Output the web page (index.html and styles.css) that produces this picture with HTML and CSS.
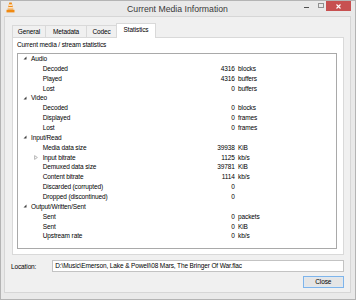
FILE: index.html
```html
<!DOCTYPE html>
<html>
<head>
<meta charset="utf-8">
<link rel="stylesheet" href="styles.css">
</head>
<body>
<div class="window">
  <div class="titlebar">
    <div class="tb-left">
      <svg class="vlc" width="9" height="11" viewBox="0 0 9 11">
        <path d="M3.3 0.5 L5.7 0.5 L7.4 7.5 L1.6 7.5 Z" fill="#f08a12"/>
        <path d="M2.9 2.6 L6.1 2.6 L6.4 3.8 L2.6 3.8 Z" fill="#fff"/>
        <path d="M2.2 5.3 L6.8 5.3 L7.1 6.5 L1.9 6.5 Z" fill="#fff"/>
        <path d="M0.5 7.8 L8.5 7.8 L8.5 10.4 L0.5 10.4 Z" fill="#f08a12"/>
      </svg>
    </div>
    <div class="title">Current Media Information</div>
    <div class="tb-right">
      <div class="cap-btn min"><span class="dash"></span></div>
      <div class="cap-btn max"><span class="box"></span></div>
      <div class="cap-btn close">
        <svg width="5" height="5" viewBox="0 0 5 5"><path d="M0.5 0.5 L4.5 4.5 M4.5 0.5 L0.5 4.5" stroke="#fff" stroke-width="1.1"/></svg>
      </div>
    </div>
  </div>
  <div class="client">
    <div class="tabs">
      <div class="tab t-general">General</div>
      <div class="tab t-meta">Metadata</div>
      <div class="tab t-codec">Codec</div>
      <div class="tab t-stats active">Statistics</div>
    </div>
    <div class="pane">
      <div class="pane-label">Current media / stream statistics</div>
      <div class="tree">
        <div class="row top"><span class="name"><svg class="exp" width="4" height="4" viewBox="0 0 4 4"><path d="M3.5 0.5 L3.5 3.5 L0.5 3.5 Z" fill="#404040"/></svg>Audio</span></div>
        <div class="row"><span class="name child">Decoded</span><span class="val">4316</span><span class="unit">blocks</span></div>
        <div class="row"><span class="name child">Played</span><span class="val">4316</span><span class="unit">buffers</span></div>
        <div class="row"><span class="name child">Lost</span><span class="val">0</span><span class="unit">buffers</span></div>
        <div class="row top"><span class="name"><svg class="exp" width="4" height="4" viewBox="0 0 4 4"><path d="M3.5 0.5 L3.5 3.5 L0.5 3.5 Z" fill="#404040"/></svg>Video</span></div>
        <div class="row"><span class="name child">Decoded</span><span class="val">0</span><span class="unit">blocks</span></div>
        <div class="row"><span class="name child">Displayed</span><span class="val">0</span><span class="unit">frames</span></div>
        <div class="row"><span class="name child">Lost</span><span class="val">0</span><span class="unit">frames</span></div>
        <div class="row top"><span class="name"><svg class="exp" width="4" height="4" viewBox="0 0 4 4"><path d="M3.5 0.5 L3.5 3.5 L0.5 3.5 Z" fill="#404040"/></svg>Input/Read</span></div>
        <div class="row"><span class="name child">Media data size</span><span class="val">39938</span><span class="unit">KiB</span></div>
        <div class="row"><span class="name collapsed"><svg class="col" width="4" height="5" viewBox="0 0 4 5"><path d="M0.6 0.6 L3.4 2.5 L0.6 4.4 Z" fill="none" stroke="#a6a6a6" stroke-width="0.8"/></svg>Input bitrate</span><span class="val">1125</span><span class="unit">kb/s</span></div>
        <div class="row"><span class="name child">Demuxed data size</span><span class="val">39781</span><span class="unit">KiB</span></div>
        <div class="row"><span class="name child">Content bitrate</span><span class="val">1114</span><span class="unit">kb/s</span></div>
        <div class="row"><span class="name child">Discarded (corrupted)</span><span class="val">0</span><span class="unit"></span></div>
        <div class="row"><span class="name child">Dropped (discontinued)</span><span class="val">0</span><span class="unit"></span></div>
        <div class="row top"><span class="name"><svg class="exp" width="4" height="4" viewBox="0 0 4 4"><path d="M3.5 0.5 L3.5 3.5 L0.5 3.5 Z" fill="#404040"/></svg>Output/Written/Sent</span></div>
        <div class="row"><span class="name child">Sent</span><span class="val">0</span><span class="unit">packets</span></div>
        <div class="row"><span class="name child">Sent</span><span class="val">0</span><span class="unit">KiB</span></div>
        <div class="row"><span class="name child">Upstream rate</span><span class="val">0</span><span class="unit">kb/s</span></div>
      </div>
    </div>
    <div class="loc-row">
      <span class="loc-label">Location:</span>
      <div class="loc-input">D:\Music\Emerson, Lake &amp; Powell\08 Mars, The Bringer Of War.flac</div>
    </div>
    <div class="btn-row">
      <div class="btn">Close</div>
    </div>
  </div>
</div>
</body>
</html>
```

FILE: styles.css
```css
html, body {
  margin: 0;
  padding: 0;
  background: #e8e8e8;
}
body {
  width: 356px;
  height: 300px;
  overflow: hidden;
  font-family: "Liberation Sans", Arial, sans-serif;
  font-size: 6.5px;
  letter-spacing: -0.12px;
  color: #000;
}
.window {
  box-sizing: border-box;
  width: 356px;
  height: 300px;
  background: #e9e9e9;
  border: 1px solid #b4b4b4;
  padding: 0 4px 6px 3px;
  display: flex;
  flex-direction: column;
}
.titlebar {
  height: 15px;
  display: grid;
  grid-template-columns: 1fr auto 1fr;
  align-items: start;
}
.tb-left {
  padding: 1px 0 0 2px;
}
.vlc {
  display: block;
}
.title {
  font-size: 8.7px;
  letter-spacing: 0;
  line-height: 8px;
  padding-top: 4px;
  color: #3a3a3a;
}
.tb-right {
  display: flex;
  justify-content: flex-end;
  align-items: flex-start;
}
.cap-btn {
  height: 10px;
  display: flex;
  align-items: center;
  justify-content: center;
}
.min {
  width: 10px;
  margin-right: 5px;
}
.min .dash {
  width: 5px;
  height: 1px;
  background: #505050;
  margin-top: 2px;
}
.max {
  width: 10px;
}
.max .box {
  box-sizing: border-box;
  width: 6px;
  height: 5px;
  border: 1px solid #909090;
  margin-top: -1px;
}
.close {
  width: 25px;
  background: #c75050;
}
.close svg {
  display: block;
}
.client {
  flex: 1;
  background: #f0f0f0;
  border: 1px solid #d6d6d6;
  padding: 6px 6px 4px 7px;
  display: flex;
  flex-direction: column;
}
.tabs {
  height: 14px;
  display: flex;
  align-items: flex-end;
  position: relative;
  z-index: 1;
}
.tab {
  box-sizing: border-box;
  height: 12px;
  line-height: 11px;
  text-align: center;
  background: #f0f0f0;
  border: 1px solid #d9d9d9;
  border-bottom: none;
  margin-left: -1px;
}
.tab:first-child {
  margin-left: 0;
}
.t-general { width: 34px; }
.t-meta { width: 42px; }
.t-codec { width: 31px; }
.t-stats { width: 40px; }
.tab.active {
  height: 15px;
  margin-bottom: -1px;
  background: #ffffff;
  line-height: 12px;
}
.pane {
  flex: 1;
  background: #ffffff;
  border: 1px solid #d9d9d9;
  padding: 2px 6px 5px 4px;
  display: flex;
  flex-direction: column;
}
.pane-label {
  line-height: 10px;
  margin-bottom: 3px;
}
.tree {
  flex: 1;
  border: 1px solid #a9a9a9;
  background: #fff;
}
.row {
  height: 9.86px;
  line-height: 9.86px;
  display: grid;
  grid-template-columns: 181.3px 32px 1fr;
  column-gap: 3.4px;
  white-space: nowrap;
}
.name {
  padding-left: 5px;
  display: flex;
  align-items: center;
}
.name.child {
  padding-left: 24.7px;
}
.name.collapsed {
  padding-left: 16px;
}
.exp {
  display: block;
  margin-right: 4px;
  margin-top: -1px;
}
.col {
  display: block;
  margin-right: 4.7px;
}
.val {
  text-align: right;
}
.loc-row {
  margin-top: 5.7px;
  height: 11.6px;
  display: flex;
  align-items: center;
  margin-left: -1px;
}
.loc-label {
  width: 41.3px;
}
.loc-input {
  box-sizing: border-box;
  flex: 1;
  height: 11.6px;
  line-height: 9.6px;
  background: #fff;
  border: 1px solid #c3c3c3;
  padding-left: 2px;
  white-space: nowrap;
  overflow: hidden;
}
.btn-row {
  margin-top: 4.4px;
  display: flex;
  justify-content: flex-end;
}
.btn {
  box-sizing: border-box;
  width: 41.4px;
  height: 11.6px;
  line-height: 9.6px;
  text-align: center;
  background: #e5e5e5;
  border: 1px solid #7eb4ea;
  box-shadow: inset 0 0 0 0.5px #dcecfc;
}
```
